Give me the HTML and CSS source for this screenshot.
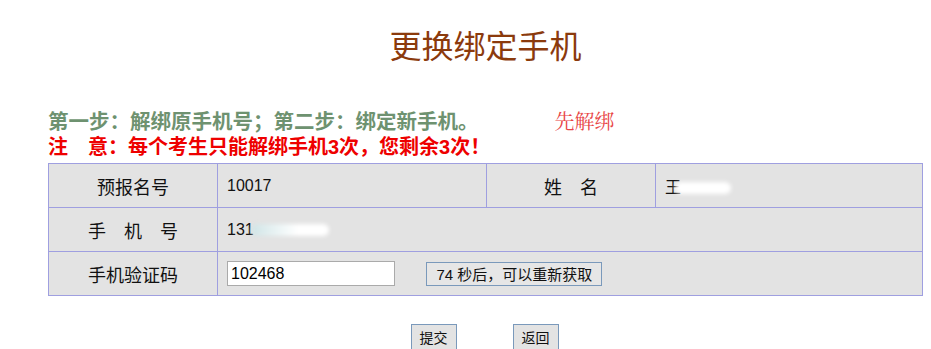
FILE: index.html
```html
<!DOCTYPE html>
<html lang="zh-CN">
<head>
    <meta charset="UTF-8">
    <title>更换绑定手机</title>
    <link rel="stylesheet" href="styles.css">
</head>
<body>
    <h1 class="title">更换绑定手机</h1>
    <div class="tips">
        <div class="step-row">
            <span class="step">第一步：解绑原手机号；第二步：绑定新手机。</span>
            <span class="unbind">先解绑</span>
        </div>
        <div class="notice">注&emsp;意：每个考生只能解绑手机3次，您剩余3次！</div>
    </div>
    <table class="info">
        <tr>
            <td class="label">预报名号</td>
            <td class="value">10017</td>
            <td class="label">姓&emsp;名</td>
            <td class="value">王<span class="blur blur-name"></span></td>
        </tr>
        <tr>
            <td class="label">手&emsp;机&emsp;号</td>
            <td class="value" colspan="3">131<span class="blur blur-phone"></span></td>
        </tr>
        <tr>
            <td class="label">手机验证码</td>
            <td class="value" colspan="3">
                <input class="code" type="text" value="102468">
                <button class="resend">74 秒后，可以重新获取</button>
            </td>
        </tr>
    </table>
    <div class="actions">
        <button class="btn">提交</button>
        <button class="btn">返回</button>
    </div>
</body>
</html>
```
FILE: styles.css
```css
body {
    margin: 0;
    font-family: "Liberation Sans", "Noto Sans CJK SC", sans-serif;
    background: #fff;
    overflow: hidden;
}

.title {
    margin: 27px 0 0;
    padding-left: 40px;
    text-align: center;
    font-size: 32px;
    font-weight: normal;
    color: #8b3a0c;
    line-height: 40px;
}

.tips {
    margin: 40px 0 0 48px;
}

.step-row {
    display: flex;
    align-items: center;
    height: 26px;
}

.step {
    font-size: 20.5px;
    font-weight: bold;
    color: #6e9270;
}

.unbind {
    margin-left: 76px;
    font-family: "Noto Serif CJK SC", "Liberation Serif", "Noto Sans CJK SC", serif;
    font-size: 20px;
    color: #e84545;
}

.notice {
    margin-top: 2px;
    font-size: 20px;
    font-weight: bold;
    color: #ee0000;
    line-height: 24px;
}

.info {
    margin: 4px 0 0 48px;
    width: 875px;
    border-collapse: collapse;
    background: #e3e3e3;
    font-size: 16px;
    color: #111;
}

.info td {
    border: 1px solid #9f9fe0;
    height: 43px;
    padding: 0 9px;
}

.info .label {
    width: 150px;
    text-align: center;
    font-size: 18px;
}

.info td:nth-child(2) {
    width: 250px;
}

.blur {
    display: inline-block;
    height: 12px;
    vertical-align: middle;
    background: #fff;
    border-radius: 6px;
    filter: blur(2px);
}

.blur-name {
    width: 56px;
    margin-left: -6px;
}

.blur-phone {
    width: 78px;
    margin-left: -3px;
    background: linear-gradient(90deg, #cfe4e6, #fff 60%);
}

.code {
    width: 160px;
    height: 21px;
    padding: 1px 3px;
    border: 1px solid #aaa;
    font-family: "Liberation Sans", sans-serif;
    font-size: 16px;
    color: #000;
    vertical-align: middle;
}

.resend {
    margin-left: 27px;
    height: 24px;
    padding: 0 9px;
    border: 1px solid #7a99bb;
    background: #e6e6e6;
    font-family: "Liberation Sans", "Noto Sans CJK SC", sans-serif;
    font-size: 15px;
    color: #111;
    vertical-align: middle;
}

.actions {
    margin-top: 28px;
    padding-left: 38px;
    display: flex;
    justify-content: center;
    gap: 56px;
}

.btn {
    height: 26px;
    padding: 0 8px;
    border: 1px solid #7a99bb;
    background: #e3e3e3;
    font-family: "Noto Sans CJK SC", sans-serif;
    font-size: 14px;
    color: #111;
}
```
